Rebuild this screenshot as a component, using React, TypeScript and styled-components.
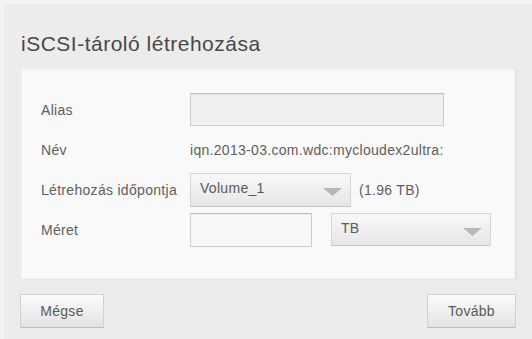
import React from 'react';
import styled, { createGlobalStyle } from 'styled-components';

const FONT = `"Liberation Sans", Arial, sans-serif`;

const GlobalStyle = createGlobalStyle`
  html, body {
    margin: 0;
    padding: 0;
    background: #ececec;
    font-family: ${FONT};
  }
  * {
    box-sizing: border-box;
  }
`;

const Page = styled.div`
  width: 532px;
  height: 339px;
  background: #ececec;
  border-left: 4px solid #f3f3f3;
  border-top: 4px solid #f3f3f3;
  padding: 28px 17px 0 17px;
  font-family: ${FONT};
  color: #555;
`;

const Title = styled.div`
  font-size: 21px;
  line-height: 24px;
  font-weight: 400;
  letter-spacing: 0.5px;
  color: #484848;
`;

const Panel = styled.div`
  margin-top: 13px;
  width: 494px;
  height: 210px;
  background: #f9f9f9;
  border: 1px solid #f2f2f2;
  box-shadow: 2px 1px 2px rgba(0, 0, 0, 0.04);
  padding: 23px 0 0 19px;
  display: grid;
  grid-template-columns: 149px auto;
  grid-auto-rows: 33px;
  row-gap: 7px;
  align-items: center;
`;

const Label = styled.div`
  font-size: 14px;
  letter-spacing: 0.3px;
  color: #5e5e5e;
`;

const Field = styled.div<{ $gap?: number }>`
  display: flex;
  align-items: center;
  gap: ${(p) => p.$gap ?? 19}px;
  height: 33px;
`;

const TextInput = styled.div<{ $width: number; $muted?: boolean }>`
  width: ${(p) => p.$width}px;
  height: ${(p) => (p.$muted ? 33 : 34)}px;
  background: ${(p) => (p.$muted ? '#efefef' : '#f8f8f8')};
  border: 1px solid #cdcdcd;
  border-top-color: #bdbdbd;
  box-shadow: inset 0 1px 1px rgba(0, 0, 0, 0.05);
`;

const Value = styled.div`
  font-size: 14px;
  letter-spacing: 0.3px;
  color: #5e5e5e;
  white-space: nowrap;
`;

const Select = styled.div<{ $width: number }>`
  position: relative;
  width: ${(p) => p.$width}px;
  height: ${(p) => (p.$width > 160 ? 34 : 33)}px;
  background: linear-gradient(#f8f8f8, #e6e6e6);
  border: 1px solid #d6d6d6;
  border-bottom-color: #c6c6c6;
  display: flex;
  align-items: center;
  padding: 0 0 4px 9px;
  font-size: 14px;
  letter-spacing: 0.3px;
  color: #5a5a5a;
`;

const Arrow = styled.svg`
  position: absolute;
  right: 8px;
  top: 14px;
`;

const Footer = styled.div`
  margin: 15px -1px 0 -1px;
  display: flex;
  justify-content: space-between;
`;

const Button = styled.button<{ $width: number }>`
  width: ${(p) => p.$width}px;
  height: 34px;
  background: linear-gradient(#fbfbfb, #e3e3e3);
  border: 1px solid #d2d2d2;
  border-bottom-color: #bdbdbd;
  border-radius: 0;
  font-family: ${FONT};
  font-size: 14px;
  letter-spacing: 0.3px;
  color: #5a5a5a;
  padding: 0;
`;

const DropArrow = () => (
  <Arrow width="19" height="8" viewBox="0 0 19 8">
    <polygon points="0,0 19,0 9.5,8" fill="#b7b7b7" />
  </Arrow>
);

const App: React.FC = () => {
  return (
    <>
      <GlobalStyle />
      <Page>
        <Title>iSCSI-tároló létrehozása</Title>
        <Panel>
          <Label>Alias</Label>
          <Field>
            <TextInput $width={254} $muted />
          </Field>

          <Label>Név</Label>
          <Value>iqn.2013-03.com.wdc:mycloudex2ultra:</Value>

          <Label>Létrehozás időpontja</Label>
          <Field $gap={8}>
            <Select $width={161}>
              Volume_1
              <DropArrow />
            </Select>
            <Value>(1.96 TB)</Value>
          </Field>

          <Label>Méret</Label>
          <Field>
            <TextInput $width={122} />
            <Select $width={160}>
              TB
              <DropArrow />
            </Select>
          </Field>
        </Panel>
        <Footer>
          <Button $width={84}>Mégse</Button>
          <Button $width={89}>Tovább</Button>
        </Footer>
      </Page>
    </>
  );
};

export default App;
